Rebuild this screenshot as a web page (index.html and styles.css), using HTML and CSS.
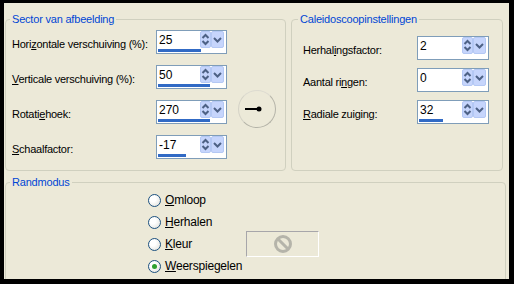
FILE: index.html
```html
<!DOCTYPE html>
<html lang="nl">
<head>
<meta charset="UTF-8">
<title>Caleidoscoop</title>
<link rel="stylesheet" href="styles.css">
</head>
<body>
<div class="window">
    <div class="top">
        <!-- Sector van afbeelding -->
        <fieldset class="group sector">
            <legend>Sector van afbeelding</legend>
            <div class="fields">
                <label>Hori<u>z</u>ontale verschuiving (%):</label>
                <div class="spin">
                    <div class="spin-row">
                        <span class="value">25</span>
                        <span class="btn updown"><svg width="9" height="15" viewBox="0 0 9 15"><polyline points="1.5,6 4.5,3 7.5,6"/><polyline points="1.5,9 4.5,12 7.5,9"/></svg></span>
                        <span class="btn drop"><svg width="11" height="15" viewBox="0 0 11 15"><polyline points="2,6 5.5,9.5 9,6"/></svg></span>
                    </div>
                    <div class="bar"><i style="width:43px"></i></div>
                </div>

                <label><u>V</u>erticale verschuiving (%):</label>
                <div class="spin">
                    <div class="spin-row">
                        <span class="value">50</span>
                        <span class="btn updown"><svg width="9" height="15" viewBox="0 0 9 15"><polyline points="1.5,6 4.5,3 7.5,6"/><polyline points="1.5,9 4.5,12 7.5,9"/></svg></span>
                        <span class="btn drop"><svg width="11" height="15" viewBox="0 0 11 15"><polyline points="2,6 5.5,9.5 9,6"/></svg></span>
                    </div>
                    <div class="bar"><i style="width:52px"></i></div>
                </div>

                <label>Rotati<u>e</u>hoek:</label>
                <div class="spin">
                    <div class="spin-row">
                        <span class="value">270</span>
                        <span class="btn updown"><svg width="9" height="15" viewBox="0 0 9 15"><polyline points="1.5,6 4.5,3 7.5,6"/><polyline points="1.5,9 4.5,12 7.5,9"/></svg></span>
                        <span class="btn drop"><svg width="11" height="15" viewBox="0 0 11 15"><polyline points="2,6 5.5,9.5 9,6"/></svg></span>
                    </div>
                    <div class="bar"><i style="width:52px"></i></div>
                </div>

                <label><u>S</u>chaalfactor:</label>
                <div class="spin">
                    <div class="spin-row">
                        <span class="value">-17</span>
                        <span class="btn updown"><svg width="9" height="15" viewBox="0 0 9 15"><polyline points="1.5,6 4.5,3 7.5,6"/><polyline points="1.5,9 4.5,12 7.5,9"/></svg></span>
                        <span class="btn drop"><svg width="11" height="15" viewBox="0 0 11 15"><polyline points="2,6 5.5,9.5 9,6"/></svg></span>
                    </div>
                    <div class="bar"><i style="width:28px"></i></div>
                </div>

                <!-- rotation dial -->
                <div class="dial">
                    <svg width="38" height="38" viewBox="0 0 38 38">
                        <line x1="7" y1="19" x2="21" y2="19"/>
                        <circle cx="21" cy="19" r="2.5"/>
                    </svg>
                </div>
            </div>
        </fieldset>

        <!-- Caleidoscoopinstellingen -->
        <fieldset class="group kaleido">
            <legend>Caleidoscoopinstellingen</legend>
            <div class="fields">
                <label>Herhal<u>i</u>ngsfactor:</label>
                <div class="spin">
                    <div class="spin-row">
                        <span class="value">2</span>
                        <span class="btn updown"><svg width="9" height="15" viewBox="0 0 9 15"><polyline points="1.5,6 4.5,3 7.5,6"/><polyline points="1.5,9 4.5,12 7.5,9"/></svg></span>
                        <span class="btn drop"><svg width="11" height="15" viewBox="0 0 11 15"><polyline points="2,6 5.5,9.5 9,6"/></svg></span>
                    </div>
                    <div class="bar"></div>
                </div>

                <label>Aantal ri<u>n</u>gen:</label>
                <div class="spin">
                    <div class="spin-row">
                        <span class="value">0</span>
                        <span class="btn updown"><svg width="9" height="15" viewBox="0 0 9 15"><polyline points="1.5,6 4.5,3 7.5,6"/><polyline points="1.5,9 4.5,12 7.5,9"/></svg></span>
                        <span class="btn drop"><svg width="11" height="15" viewBox="0 0 11 15"><polyline points="2,6 5.5,9.5 9,6"/></svg></span>
                    </div>
                    <div class="bar"></div>
                </div>

                <label><u>R</u>adiale zuiging:</label>
                <div class="spin">
                    <div class="spin-row">
                        <span class="value">32</span>
                        <span class="btn updown"><svg width="9" height="15" viewBox="0 0 9 15"><polyline points="1.5,6 4.5,3 7.5,6"/><polyline points="1.5,9 4.5,12 7.5,9"/></svg></span>
                        <span class="btn drop"><svg width="11" height="15" viewBox="0 0 11 15"><polyline points="2,6 5.5,9.5 9,6"/></svg></span>
                    </div>
                    <div class="bar"><i style="width:24px"></i></div>
                </div>
            </div>
        </fieldset>
    </div>

    <!-- Randmodus -->
    <fieldset class="group edges">
        <legend>Randmodus</legend>
        <div class="modes">
            <label class="radio"><span class="knob"></span><span><u>O</u>mloop</span></label>
            <label class="radio"><span class="knob"></span><span><u>H</u>erhalen</span></label>
            <label class="radio"><span class="knob"></span><span><u>K</u>leur</span></label>
            <div class="swatch">
                <svg width="20" height="20" viewBox="0 0 20 20">
                    <circle cx="10" cy="10" r="7.5"/>
                    <line x1="5" y1="5" x2="15" y2="15"/>
                </svg>
            </div>
            <label class="radio"><span class="knob checked"></span><span><u>W</u>eerspiegelen</span></label>
        </div>
    </fieldset>
</div>
</body>
</html>
```

FILE: styles.css
```css
body {
    margin: 0;
    background: black;
    font-family: "Liberation Sans", Arial, sans-serif;
    font-size: 11px;
    color: black;
}

.window {
    margin: 3px 0 0 4px;
    width: 505px;
    height: 276px;
    padding: 10px 0 0 1px;
    box-sizing: border-box;
    background: #ece9d8;
    overflow: hidden;
}

.top {
    display: flex;
    gap: 5px;
}

.group {
    margin: 0;
    border: 1px solid #d0d0bf;
    border-radius: 4px;
    min-width: 0;
}

.group legend {
    color: #0046d5;
    padding: 0 2px;
    margin-left: -2px;
    letter-spacing: -0.2px;
}

u {
    text-decoration: underline;
    text-underline-offset: 1px;
}

/* Sector van afbeelding */
.sector {
    width: 281px;
    box-sizing: border-box;
    padding: 5px 0 11px 6px;
}

.sector .fields {
    display: grid;
    grid-template-columns: 144px 71px 38px;
    grid-auto-rows: 24px;
    row-gap: 11px;
}

.fields label {
    align-self: center;
    padding-top: 4px;
    letter-spacing: -0.25px;
}

.dial {
    grid-column: 3;
    grid-row: 1 / 5;
    align-self: start;
    margin-top: 60px;
    margin-left: 11px;
    width: 38px;
    height: 38px;
    box-sizing: border-box;
    border-radius: 50%;
    border: 1px solid #b4b3a8;
    border-top-color: #dcdad0;
    border-left-color: #d4d2c6;
    background: #ece9d8;
}

.dial svg {
    display: block;
    margin: -1px;
}

.dial line {
    stroke: black;
    stroke-width: 2;
}

.dial circle {
    fill: black;
}

/* Caleidoscoopinstellingen */
.kaleido {
    width: 212px;
    box-sizing: border-box;
    padding: 11px 0 0 11px;
}

.kaleido legend {
    margin-left: -5px;
}

.kaleido .fields {
    display: grid;
    grid-template-columns: 114px 72px;
    grid-auto-rows: 23px;
    row-gap: 9px;
}

/* spin box */
.spin {
    height: 24px;
    box-sizing: border-box;
    border: 1px solid #7f9db9;
    background: white;
    display: flex;
    flex-direction: column;
}

.spin-row {
    display: flex;
    height: 17px;
}

.value {
    flex: 1;
    padding: 2px 0 0 2px;
    font-size: 12px;
    line-height: 14px;
}

.btn {
    height: 15px;
    background: #c6d5fc;
    border: 1px solid #b4c8f4;
    border-radius: 2px;
    display: flex;
}

.btn.updown {
    width: 9px;
}

.btn.drop {
    width: 11px;
    margin-right: 2px;
}

.btn svg {
    display: block;
}

.btn polyline {
    fill: none;
    stroke: #4d6185;
    stroke-width: 2;
}

.bar {
    height: 3px;
    margin: 1px 1px 0;
}

.bar i {
    display: block;
    height: 3px;
    background: #316ac5;
}

/* Randmodus */
.edges {
    margin-top: 5px;
    width: 501px;
    height: 120px;
    box-sizing: border-box;
    padding: 1px 0 0 6px;
}

.modes {
    display: grid;
    grid-template-columns: 98px 73px;
    grid-template-rows: repeat(4, 22px);
    margin-left: 136px;
}

.radio {
    grid-column: 1;
    display: flex;
    align-items: center;
    gap: 4px;
    font-size: 12px;
    letter-spacing: -0.2px;
}

.knob {
    width: 13px;
    height: 13px;
    box-sizing: border-box;
    border-radius: 50%;
    border: 1px solid #1c5180;
    background: radial-gradient(circle at 35% 35%, #ffffff 30%, #dcdcd6 100%);
    display: flex;
    align-items: center;
    justify-content: center;
}

.knob.checked::after {
    content: "";
    width: 5px;
    height: 5px;
    border-radius: 50%;
    background: #2fa12f;
}

.swatch {
    grid-column: 2;
    grid-row: 3;
    align-self: center;
    height: 26px;
    box-sizing: border-box;
    border: 1px solid #fff;
    border-top-color: #a7a6aa;
    border-left-color: #a7a6aa;
    display: flex;
    align-items: center;
    justify-content: center;
}

.swatch circle {
    fill: none;
    stroke: #b5b4aa;
    stroke-width: 3;
}

.swatch line {
    stroke: #b5b4aa;
    stroke-width: 3;
}
```
